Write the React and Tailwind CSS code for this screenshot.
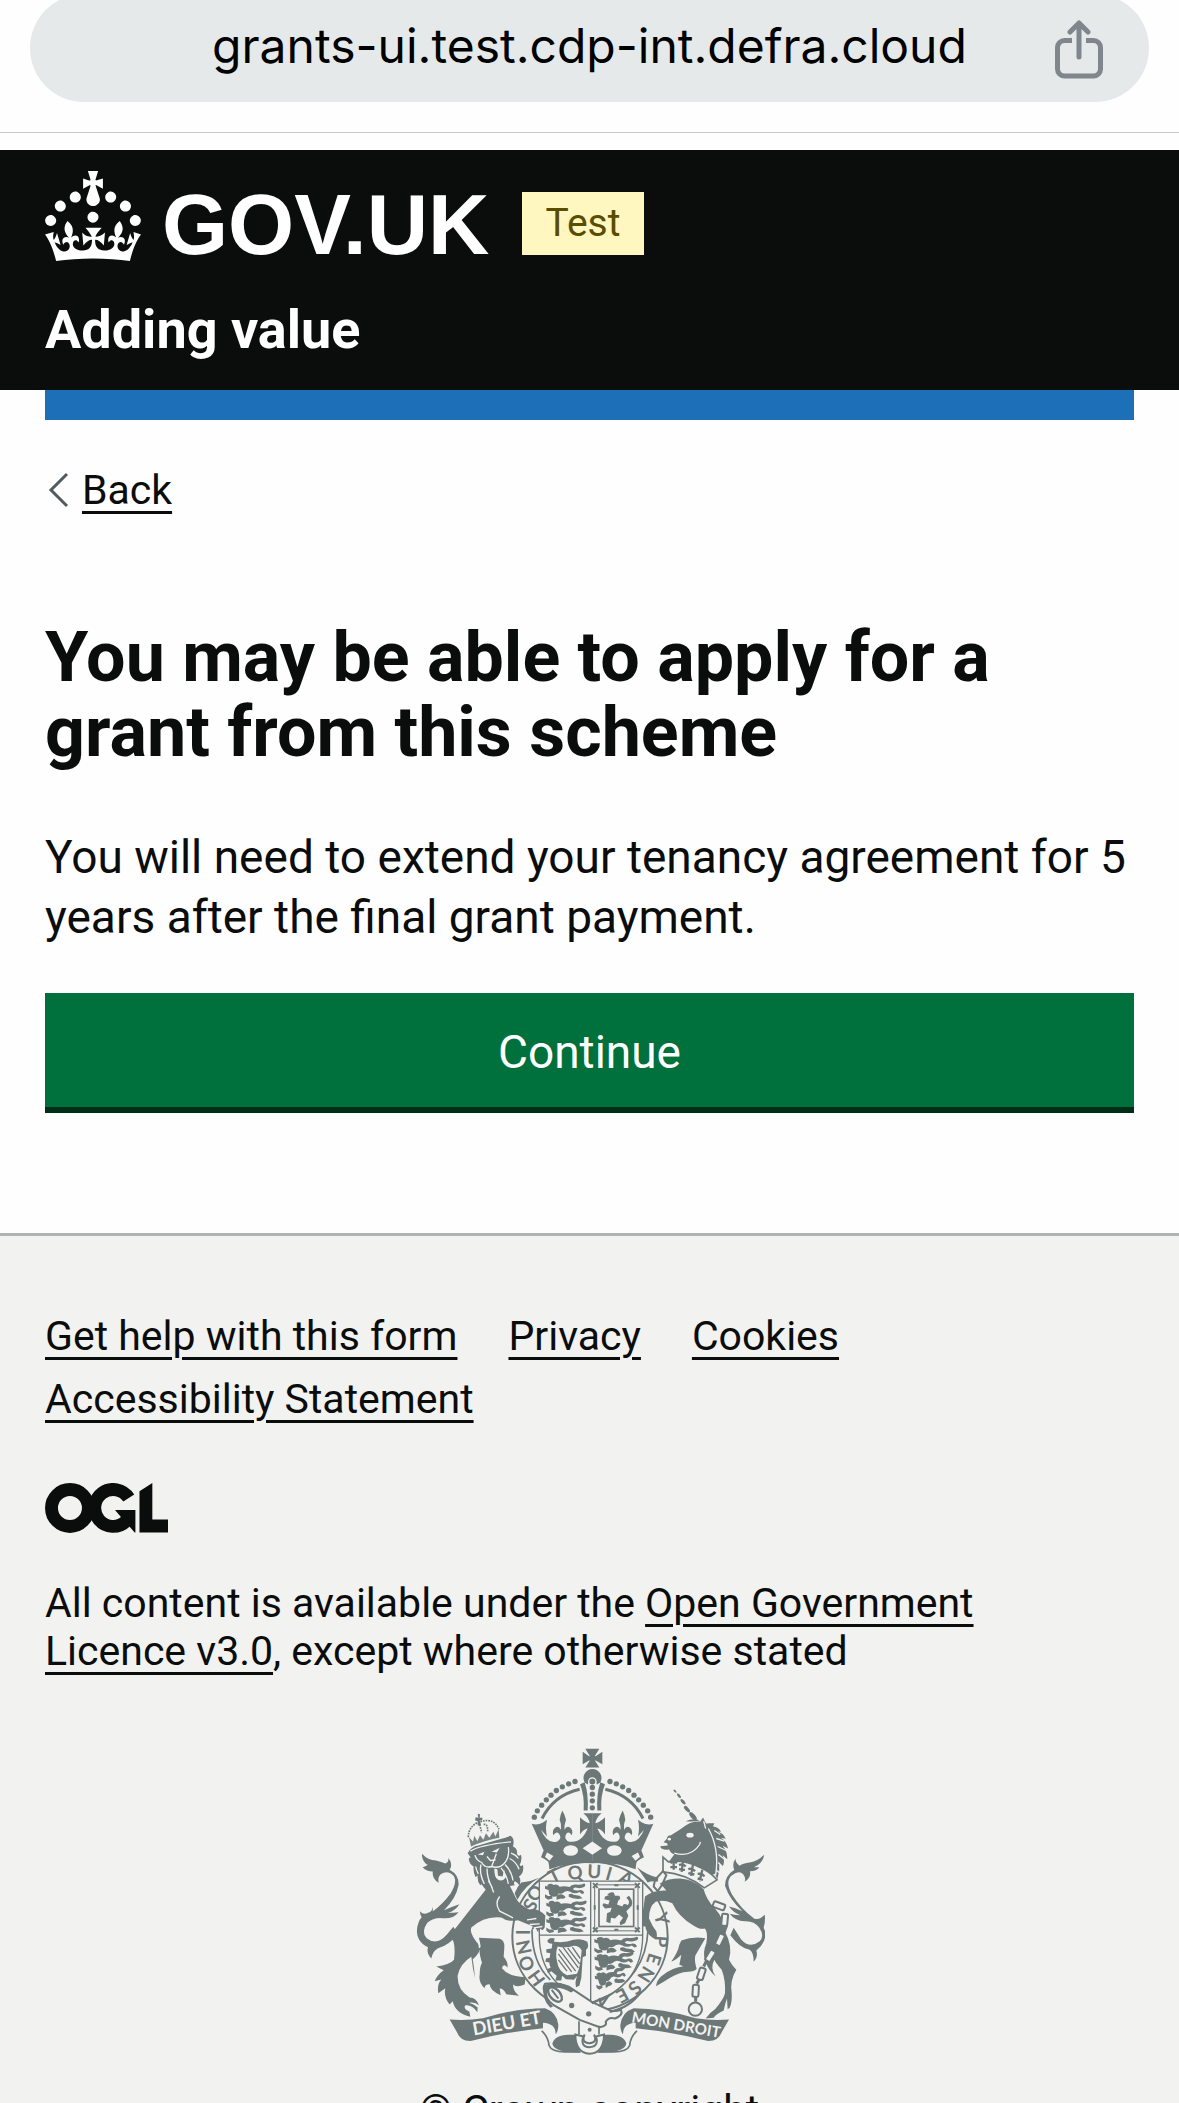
import React from "react";

const INK = "#6c7777";
const PAPER = "#f2f2f0";

function ShareIcon() {
  return (
    <svg className="h-[60px] w-[48px]" viewBox="0 0 48 60" fill="none" stroke="#7f868c" strokeWidth="5" strokeLinecap="round" strokeLinejoin="round" aria-hidden="true">
      <path d="M24 37V4M15 12l9-9 9 9" />
      <path strokeLinecap="butt" d="M17 20.500H9.500a7 7 0 0 0-7 7V49a7 7 0 0 0 7 7h29a7 7 0 0 0 7-7V27.500a7 7 0 0 0-7-7H31" />
    </svg>
  );
}

function Crown() {
  return (
    <svg className="h-[90px] w-[96px]" viewBox="0 0 32 30" fill="white" aria-hidden="true">
      <path
        fillRule="evenodd"
        d="M22.6 10.4c-1 .4-2-.1-2.4-1-.4-.9.1-2 1-2.4.9-.4 2 .1 2.4 1s-.1 2-1 2.4m-5.9 6.7c-.9.4-2-.1-2.4-1-.4-.9.1-2 1-2.4.9-.4 2 .1 2.4 1s-.1 2-1 2.4m10.8-3.7c-1 .4-2-.1-2.4-1-.4-.9.1-2 1-2.4.9-.4 2 .1 2.4 1s0 2-1 2.4m3.3 4.8c-1 .4-2-.1-2.4-1-.4-.9.1-2 1-2.4.9-.4 2 .1 2.4 1s-.1 2-1 2.4M17 4.7l2.3 1.2V2.5l-2.3.7-.2-.2.9-3h-3.4l.9 3-.2.2c-.1.1-2.3-.7-2.3-.7v3.4L15 4.7c.1.1.1.2.2.2l-1.3 4c-.1.2-.1.4-.1.6 0 1.1.8 2 1.9 2.2h.7c1-.2 1.9-1.1 1.9-2.1 0-.2 0-.4-.1-.6l-1.3-4c-.1-.2 0-.2.1-.3m-7.6 5.7c.9.4 2-.1 2.4-1 .4-.9-.1-2-1-2.4-.9-.4-2 .1-2.4 1s0 2 1 2.4m-5 3c.9.4 2-.1 2.4-1 .4-.9-.1-2-1-2.4-.9-.4-2 .1-2.4 1s.1 2 1 2.4m-3.2 4.8c.9.4 2-.1 2.4-1 .4-.9-.1-2-1-2.4-.9-.4-2 .1-2.4 1s0 2 1 2.4m14.8 11c4.4 0 8.6.3 12.3.8 1.1-4.5 2.4-7 3.7-8.8l-2.5-.9c.2 1.3.3 1.9 0 2.7-.4-.4-.8-1.1-1.1-2.3l-1.2 4c.7-.5 1.3-.8 2-.9-1.1 2.5-2.6 3.1-3.5 3-1.1-.2-1.7-1.2-1.5-2.1.3-1.2 1.5-1.5 2.1-.1 1.1-2.3-.8-3-2-2.3 1.9-1.9 2.1-3.5.6-5.6-2.1 1.6-2.1 3.2-1.2 5.5-1.2-1.4-3.2-.6-2.5 1.6.9-1.4 2.1-.5 1.9.8-.2 1.1-1.7 2.1-3.5 1.9-2.7-.2-2.9-2.1-2.9-3.6.7-.1 1.9.5 2.9 1.9l.4-4.3c-1.1 1.1-2.1 1.4-3.2 1.4.4-1.2 2.1-3 2.1-3h-5.4s1.7 1.9 2.1 3c-1.1 0-2.1-.2-3.2-1.4l.4 4.3c1-1.4 2.2-2 2.9-1.9-.1 1.5-.2 3.4-2.9 3.6-1.9.2-3.4-.8-3.5-1.9-.2-1.3 1-2.2 1.9-.8.7-2.300-1.200-3-2.500-1.600.9-2.200.9-3.900-1.200-5.500-1.500 2-1.300 3.700.6 5.600-1.200-.7-3.100 0-2 2.300.6-1.400 1.800-1.100 2.100.1.2.9-.3 1.900-1.500 2.100-.9.2-2.400-.5-3.500-3 .6 0 1.200.3 2 .9l-1.200-4c-.3 1.100-.7 1.900-1.100 2.300-.3-.8-.2-1.400 0-2.700l-2.900.9C1.300 23 2.600 25.500 3.700 30c3.700-.5 7.900-.8 12.300-.8"
      />
    </svg>
  );
}

function OglLogo() {
  return (
    <svg className="h-[50px] w-[123px] text-[#0b0c0c]" viewBox="0 0 483 196" role="img" aria-label="Open Government Licence">
      <circle cx="98" cy="98" r="72.500" fill="none" stroke="currentColor" strokeWidth="50.700" />
      <path d="M329 59A72.500 72.500 0 1 0 318 150" fill="none" stroke="currentColor" strokeWidth="50.700" />
      <path fill="currentColor" d="M275 106h80v88h-3l-34-39-19-21zM371 32.500 421.500 0v143H483v51H371z" />
    </svg>
  );
}

function PassantLion() {
  return (
    <g fill={INK}>
      <path d="M6 3q10-7 16 0 10-4 16 5l-2 16q-3 13-14 12-12-1-12-14zM0 5l10 4-2 8-8-3z" />
      <path d="M36 9q14-5 28 0 6-9 18-7 10 2 20-3 6 2 1 9-10 6-20 3-8-2-10 4 8 6 18 2 10 0 11 9l-6 2-6-5q-12 7-24-1-10-5-20 4-10 4-14-2z" />
      <path d="M0 29l8 5 10 0 2 7-12 3-8-6zM30 33q10-7 18-2l6 6q-6 6-12 4l-12 3zM62 29q8-4 12 1l16 3 8 7-12 2-14-2-10-4z" />
    </g>
  );
}

function HalfCrown() {
  const pearls = [[404, 262], [413, 243], [426, 226], [440, 210], [454, 196], [470, 182], [488, 171], [507, 162], [526, 155]];
  return (
    <g fill={INK}>
      {pearls.map(([x, y]) => (
        <circle key={x} cx={x} cy={y} r="8" />
      ))}
      <path d="M427 266Q462 196 540 178" fill="none" stroke={INK} strokeWidth="9" />
      <path d="M541 163l14-6q12 36 9 85h-12q3-44-11-79z" />
      <path d="M396 282Q414 287 430 278L442 270Q436 296 442 320L424 300Q428 312 440 326Q456 342 474 334Q488 326 478 312Q470 302 461 316Q456 300 468 292Q478 288 484 300Q486 282 480 270Q482 254 488 242Q496 256 499 270Q494 284 494 300Q500 288 510 292Q522 300 516 316Q508 302 500 312Q492 326 504 334Q530 340 548 322Q556 314 564 296Q552 298 541 314V262Q554 276 570 280Q568 264 551 250H579V400Q510 396 449 418Q448 398 444 392L424 382L432 362Z" />
      <ellipse cx="513" cy="362" rx="22" ry="16" fill={PAPER} />
      <path d="M441 364l24 14-15 18-17-14z" fill={PAPER} stroke={INK} strokeWidth="5" />
    </g>
  );
}

function HalfRibbon() {
  return (
    <g>
      <path fill={INK} d="M150 869q52 4 100-4 100-30 186-30 36 12 40 50 0 20-8 28 0-32-38-34v16q-104 10-214 38-34 2-44-26z" />
      <path d="M426 903q20 18 22 44 8 20 52 19h42" fill="none" stroke={INK} strokeWidth="5" />
      <path fill={INK} d="M458 942q6-26 48-27h20q2 32 18 53-80 2-86-26z" />
    </g>
  );
}

function LionSupporter() {
  return (
    <g fill={INK}>
      <path d="M67 372q18 20 42 20 18 4 28 9 12-4 9-17 15 20 4 36 28 15 27 45-8 42-44 76 22-10 46-18-10 18-34 26 18 0 32-2-18 22-50 18-26-2-44 14-20 28-2 46 30 24 60-10l20-24 14 22q-28 34-60 42-16 8-20 31-16-18-10-34-36-18-33-54 3-24 14-36-6-10-5-18 10 12 24 5 14-4 14-18 2 8 0 14 30-22 54-54 20-34 10-52-18-20-40-6-10 10-6 26-20-12-18-34-18 0-30-13 10-1 15-7-14-8-17-26z" />
      <path d="M258 480L150 618q20 16 13 72-13 16-53 20l22 11q-20 14-27 33l20-5q-14 16-9 41l21-15q-6 26 13 49l9-10q8 36 53 47l-3-16q-18-8-13-18 20-4 37 20l1-14q-12-10-26-14 18-4 30 8-8-24-28-24-38-24-36-66 8-36 41-56 4 36 11 64-4-44-7-56 26-24 22-40-34-38-26-56 40-36 90-30 18 14 50 8l44 18-4 14 12-10 8 14 4-12 10 6 6-8 2-36q-24-24-48-18-32-16-40-34l-20-40q-30-22-90-10z" />
      <path d="M238 624l62 3q15 4 14 26l-2 28q13 15 12 32-14-14-17 2 20 26 71 27l-3 22q-25 10-35 0 0 20 18 34l-38-5q-8-17-20-17l3 20q-33-15-33-33-15 0-15 12-19-16-15-40 0-24 7-36-12-36-4-50z" />
      <path d="M345 490q6-18 20-32 28-2 54-14-44 24-66 66z" />
      <path d="M204 370L214 384Q206 380 208 392Q212 406 222 410Q220 430 228 442L234 436Q232 455 242 466L250 458Q262 482 284 490L290 470Q320 470 345 466Q340 458 346 454Q360 462 358 470Q366 452 358 440Q374 430 370 405Q364 412 360 405Q368 390 364 375Q355 382 352 372Q354 355 340 350Q346 325 332 318Q320 324 300 328L236 347Q214 350 204 370Z" />
      <g stroke={PAPER} fill="none" strokeWidth="4">
        <path d="M212 364Q240 346 334 336M226 376Q230 392 246 398Q256 416 276 410L290 372M276 410Q300 418 316 398Q330 380 326 352M262 380L272 392L288 390M244 404Q238 430 254 462M262 416Q262 446 278 474M228 410Q230 422 236 432M316 404Q336 424 340 452M304 414Q322 436 326 462M330 386Q350 396 358 418M334 370Q348 374 356 386M282 488Q276 466 266 452" />
        <path d="M300 500q-16 20 0 44l40 20M382 570l28-4M390 584l30-2M402 594l26-4M215 600q26 30 24 54" />
      </g>
      <path fill={PAPER} d="M234 374l20-8-4 10zM276 366l24-12-8 14zM284 416l9 2 2 20 14 2 4-22 6 24q-10 14-24 8-12-8-11-34z" />
      <path d="M214 350l-6-28q8 8 12 14l4-18 9 16 8-18 10 14 8-20 10 14 12-18 6 14 10-22 2 26q-44 8-85 26z" fillOpacity=".9" />
      <path d="M228 262l8 2-2-12 7 1-1 11 8 0v7l-8 1 4 13-10 3v-14l-8-3z" />
      <path d="M206 322q0-30 28-44M242 276q40-14 56 22M240 284l6 24M252 284q12-4 12 20" fill="none" stroke={INK} strokeWidth="5" strokeDasharray="5 3" />
    </g>
  );
}

function UnicornSupporter() {
  const horn = [[826, 184, 6], [838, 198, 8], [850, 216, 10], [862, 238, 12], [880, 259, 15]];
  const chain = [[958, 528, 110], [975, 570, 5], [961, 630, 25], [932, 678, 32], [905, 732, 18], [888, 783, 3]];
  return (
    <g fill={INK}>
      {horn.map(([x, y, r]) => (
        <ellipse key={x} cx={x} cy={y} rx={r} ry={r * 0.45} transform={`rotate(48 ${x} ${y})`} />
      ))}
      <path d="M802 326q0-10 12-10 24-14 44-29 20-14 44-12l8-12 12 24q20 22 28 60 12 60-2 84l-20 8q-70-40-124-38l20-28q-10-2-16-15-8 5-24-3l-2-6 22-2q0-4-2-7l-10-3z" />
      <path d="M858 274q24-10 42-2-18 4-42 2z" />
      <path d="M928 280l16 0-4 10q18 2 24 16l-10-1q18 6 24 22l-14-3q18 12 21 32l-16-8q14 16 14 40l-14-12q8 18 0 34l-10-10q2 24-6 48l-10-22-14 4q16-50 2-104-6-26-14-44z" />
      <g stroke={PAPER} fill="none" strokeWidth="4">
        <path d="M926 296q34 60 22 140M944 302l18 12M950 326l24 8M954 350l26 12M956 374l24 18M956 398l18 18M952 422l12 12M912 274l6 22" />
        <path d="M824 370q50 14 76-26l2-8" />
      </g>
      <ellipse cx="871" cy="316" rx="11" ry="7" fill={PAPER} />
      <ellipse cx="809" cy="328" rx="5" ry="4" fill={PAPER} />
      <path d="M790 382L806 396Q850 388 900 412Q930 424 952 450L914 474Q860 432 790 426Z" fill={PAPER} stroke={INK} strokeWidth="5" />
      <g stroke={INK} strokeWidth="7" fill="none">
        <path d="M822 386v34M812 400q10-8 20 0M812 412h20M850 392l-4 34M838 406q12-6 20 4M838 418l18 2M880 404l-6 34M866 418q12-4 20 6M866 430l18 4M908 420l-8 34M894 432q14-2 20 8M894 446l16 4" />
      </g>
      <path d="M790 424l-24 26-4 20 12 14 14-20 12-28z" fill={PAPER} stroke={INK} strokeWidth="6" />
      <path d="M712 412q30 24 64 32l-2 12q-16-4-30 2z" />
      <path d="M736 500Q760 480 800 482Q790 470 780 462Q800 446 842 446Q882 448 912 478Q920 510 946 536Q976 570 976 606Q1000 650 988 690Q996 706 1010 720Q990 752 996 790Q998 816 990 834L984 838L982 806Q976 822 972 842Q950 852 942 864L918 866Q930 848 946 838Q972 808 976 790Q978 750 966 720Q950 702 944 690Q930 716 948 740Q924 720 916 690Q908 670 920 640Q926 610 916 596Q900 600 880 586Q836 560 818 520Q790 508 768 516Q748 530 748 566Q758 590 770 604Q774 616 770 628Q746 622 738 596Q740 588 730 590Q724 560 732 530Z" />
      <path d="M845 632q34-14 72-7l-30 52q-4 14 4 40-6 10-40 10-30 8-54 26l-28 16q2-18 16-30 30-26 66-30l-12-4 6-30q-18 18-30 20 20-28 24-50z" />
      <path d="M1094 374q-18 20-44 24-20 2-30 10-14-10-12-22-12 16-4 34-28 18-28 48 14 42 52 76-22-10-40-14 12 18 34 26-20 0-32-4 18 24 50 22 24 0 38 18 18 26 2 42-30 24-56-6l-22-34-10 22q28 38 58 44 12 8 12 36 14-14 8-34 30-24 27-56l-5-12q6-22 3-40-14 18-32 12-40-30-66-72-22-40 0-58 22-16 34-2 8 10 4 22 20-14 16-32 20 0 28-12h-16q26-10 31-38z" />
      <g fill={PAPER} stroke={INK} strokeWidth="6">
        {chain.map(([x, y, a]) => (
          <rect key={y} x={x - 9} y={y - 18} width="18" height="36" rx="5" transform={`rotate(${a} ${x} ${y})`} />
        ))}
      </g>
      <path d="M981 586l-8 22M952 644l-8 14M920 694l-8 16M898 750l-7 12M888 802v14" stroke={INK} strokeWidth="9" />
      <circle cx="887" cy="838" r="20" fill="none" stroke={INK} strokeWidth="6" />
    </g>
  );
}

function Garter() {
  const letters = [
    ["H", 410, 745, 54], ["O", 380, 701, 66], ["N", 372, 652, 78], ["I", 368, 607, 90],
    ["S", 392, 525, 118], ["O", 405, 490, 130], ["T", 464, 438, -26], ["Q", 526, 428, -8],
    ["U", 584, 425, 3], ["I", 628, 431, 16], ["A", 680, 446, 28],
    ["Y", 786, 566, 75], ["P", 784, 635, 94], ["E", 763, 688, 108], ["N", 739, 734, 122],
    ["S", 706, 774, 136], ["E", 668, 797, 152],
  ];
  return (
    <g>
      <ellipse cx="571" cy="620" rx="233" ry="224" fill={PAPER} stroke={INK} strokeWidth="6" />
      <path d="M397 600Q397 700 452 750M745 600Q740 740 600 815" fill="none" stroke={INK} strokeWidth="5" />
      <g fill={INK} fontFamily="Lato, sans-serif" fontWeight="700" fontSize="56" textAnchor="middle">
        {letters.map(([c, x, y, a], i) => (
          <text key={i} x={x} y={y} dy="20" transform={`rotate(${a} ${x} ${y})`}>{c}</text>
        ))}
      </g>
    </g>
  );
}

function Shield() {
  return (
    <g>
      <path d="M419 454h310v163q0 150-156 203-154-53-154-203z" fill={PAPER} stroke={INK} strokeWidth="4" />
      <path d="M573 454v364M419 616h310" fill="none" stroke={INK} strokeWidth="4" />
      <g transform="translate(436 462) scale(1.15 1.08)"><PassantLion /></g>
      <g transform="translate(440 513) scale(1.15 1.08)"><PassantLion /></g>
      <g transform="translate(440 562) scale(1.15 1.08)"><PassantLion /></g>
      <g transform="translate(584 622) scale(1.25 1.1)"><PassantLion /></g>
      <g transform="translate(584 674) scale(1.12 1.15) rotate(-4)"><PassantLion /></g>
      <g transform="translate(584 732) scale(.9 1.15) rotate(-12)"><PassantLion /></g>
      <g fill="none" stroke={INK}>
        <rect x="585" y="465" width="130" height="138" strokeWidth="3" />
        <rect x="598" y="478" width="104" height="112" strokeWidth="5" />
        <path d="M580 460l14 14M706 460l14 14M720 460l-14 14M594 460l-14 14M580 607l14-14M706 593l14 14M720 593l-14 14M580 593l14 14M644 466h12M644 600h12M585 526v14M714 526v14" strokeWidth="6" />
      </g>
      <path fill={INK} d="M622 496q8-12 20-8l4 10 12 0q8 8-2 14l-4 12 16 6q4-12 16-4 10-10-4-22l8-6q14 16 8 30l-16 16 6 14-10 22-14 6-2-8 10-14-12-10-12 12-12-2-2 16-12-4 2-26 10-4 4-12-20 2-8-10 4-6 14 4 4-12-16-4 2-8 14-4z" />
      <path fill={INK} fillRule="evenodd" d="M443 632q8-10 22-6l-2 10q34 4 58-6 26-6 42 6 6 18-4 24v18l-10 4-4 62-6 24-10 4q-4-16 4-34l-10 12-24-2-12-10-2 14-18 0 4-14-16-14-10 6-4-12 12-4q-4-10-4-16l-12-2 2-10 11-2 2-14-12-2v-10l16-2 2-14q-14 0-15-10zM474 650q-8 20-2 44 4 30 30 42l30-4q10-20 14-70-6-14-24-14-22 8-48 2z" />
      <path d="M478 658l50 66M476 672l40 54M476 690l26 34M490 652l46 62M504 654l36 48M518 652l24 34" stroke={INK} strokeWidth="4" />
      <path d="M436 762q34-6 70 8l70 46 56 26q16 4 32-2 8 16-18 26-18-6-28 10 6 12-18 16l-60-22-78-44q-28-22-30-50 0-8 4-14z" fill={PAPER} stroke={INK} strokeWidth="6" />
      <path d="M434 766q20-10 52-4 26 6 38 20l-10 6q-34-22-70-10-6 30 16 52l-8 4q-28-28-18-68z" fill={INK} />
      <ellipse cx="466" cy="794" rx="26" ry="15" transform="rotate(48 466 794)" fill={PAPER} stroke={INK} strokeWidth="7" />
      <path d="M456 780l20 26" stroke={INK} strokeWidth="6" />
      <path d="M576 820l50-22-22 32M600 804l4 26M630 846q60-12 94-60" fill="none" stroke={INK} strokeWidth="7" />
      <circle cx="516" cy="827" r="8" fill={INK} />
      <circle cx="567" cy="852" r="8" fill={INK} />
      <path d="M538 874v40M598 888v26" stroke={INK} strokeWidth="5" />
      <circle cx="570" cy="900" r="6" fill={INK} />
      <path d="M527 914l24 6q-10 30 18 32 30-2 20-32l24-6q0 56-44 58-42-4-42-58z" fill={PAPER} stroke={INK} strokeWidth="6" />
      <path d="M555 914q-12 24 14 26 26-2 14-26" fill="none" stroke={INK} strokeWidth="6" />
    </g>
  );
}

function RoyalArms() {
  return (
    <svg className="h-[307px] w-[350px]" viewBox="46 55 1050 920" aria-hidden="true">
      <Garter />
      <HalfCrown />
      <g transform="translate(1157 0) scale(-1 1)"><HalfCrown /></g>
      <path fill={PAPER} d="M578 335l29 20-29 20-29-20z" />
      <path fill={INK} d="M557 57h42l-13 21q0 2 2 1l20-13v37l-20-11q-2-1-2 1l13 20h-42l13-20q0-2-2-1l-19 11V66l19 13q2 1 2-1z" />
      <path fill={INK} d="M555 158a27 27 0 1 1 47 0l-10 6q-14-40-28 0z" />
      <circle cx="578" cy="155" r="11" fill={INK} stroke={PAPER} strokeWidth="4" />
      {[173, 193, 213, 234].map((y) => (
        <circle key={y} cx="578" cy={y} r="8" fill={INK} />
      ))}
      <Shield />
      <LionSupporter />
      <UnicornSupporter />
      <HalfRibbon />
      <g transform="translate(1138 0) scale(-1 1)"><HalfRibbon /></g>
      <g fill={PAPER} fontFamily="Lato, sans-serif" fontWeight="700">
        <text x="222" y="917" fontSize="55" transform="rotate(-10 222 917)">DIEU ET</text>
        <text x="694" y="877" fontSize="46" transform="rotate(10 694 877)">MON DROIT</text>
      </g>
    </svg>
  );
}

function TextLink({ children }) {
  return (
    <a href="#" className="underline decoration-[3px] underline-offset-[7px]">
      {children}
    </a>
  );
}

const footerLinks = ["Get help with this form", "Privacy", "Cookies", "Accessibility Statement"];

export default function App() {
  return (
    <div className="h-screen overflow-hidden bg-[#fefefe] font-['Roboto',sans-serif] text-[#0b0c0c]">
      <div className="border-b border-[#c8cacc] px-[30px] pb-[30px]">
        <div className="-mt-[6px] grid h-[108px] grid-cols-[1fr_auto_1fr] items-center rounded-full bg-[#e5e9ea] px-[46px]">
          <span className="col-start-2 pb-1 font-['Inter',sans-serif] text-[48px] leading-[60px] text-black">
            grants-ui.test.cdp-int.defra.cloud
          </span>
          <button type="button" aria-label="Share" className="justify-self-end pt-1">
            <ShareIcon />
          </button>
        </div>
      </div>

      <header className="mt-[17px] bg-[#0b0c0c] px-[45px] pt-[21px] pb-[30px] text-white">
        <div className="flex items-end">
          <a href="#" className="flex items-end gap-[21px]">
            <Crown />
            <span className="font-['Liberation_Sans',sans-serif] text-[85px] leading-[72px] font-bold">GOV.UK</span>
          </a>
          <strong className="mb-[6px] ml-8 bg-[#fff7bf] px-6 text-[39px] leading-[63px] font-normal text-[#594d00]">Test</strong>
        </div>
        <a href="#" className="mt-[39px] block text-[54px] leading-[60px] font-bold">Adding value</a>
      </header>

      <div className="px-[45px]">
        <div className="h-[30px] bg-[#1d70b8]" />
        <div className="mt-[46px] flex items-center">
          <svg className="mr-[13px] ml-[3px] h-[36px] w-[21px]" viewBox="0 0 21 36" fill="none" stroke="#505a5f" strokeWidth="3" aria-hidden="true">
            <path d="M19 2 3 18l16 16" />
          </svg>
          <span className="text-[41px] leading-[48px]"><TextLink>Back</TextLink></span>
        </div>

        <main className="pt-[106px] pb-[120px]">
          <h1 className="mb-[57px] text-[70px] leading-[75px] font-bold">You may be able to apply for a grant from this scheme</h1>
          <p className="mb-[46px] text-[46px] leading-[60px]">
            You will need to extend your tenancy agreement for 5 years after the final grant payment.
          </p>
          <button type="button" className="block h-[120px] w-full border-b-[6px] border-[#002d18] bg-[#00703c] pt-1 text-[46px] leading-[60px] text-white">
            Continue
          </button>
        </main>
      </div>

      <footer className="border-t-[3px] border-[#b1b4b6] bg-[#f2f2f0] px-[45px] pt-[76px] pb-20 text-[41px] leading-[48px]">
        <ul className="flex flex-wrap gap-x-[51px] gap-y-[15px]">
          {footerLinks.map((label) => (
            <li key={label}><TextLink>{label}</TextLink></li>
          ))}
        </ul>
        <div className="mt-[60px]"><OglLogo /></div>
        <p className="mt-[46px] max-w-5xl">
          All content is available under the <TextLink>Open Government Licence v3.0</TextLink>, except where otherwise stated
        </p>
        <a href="#" className="mt-[73px] flex flex-col items-center gap-[31px]">
          <RoyalArms />
          <span>© Crown copyright</span>
        </a>
      </footer>
    </div>
  );
}
